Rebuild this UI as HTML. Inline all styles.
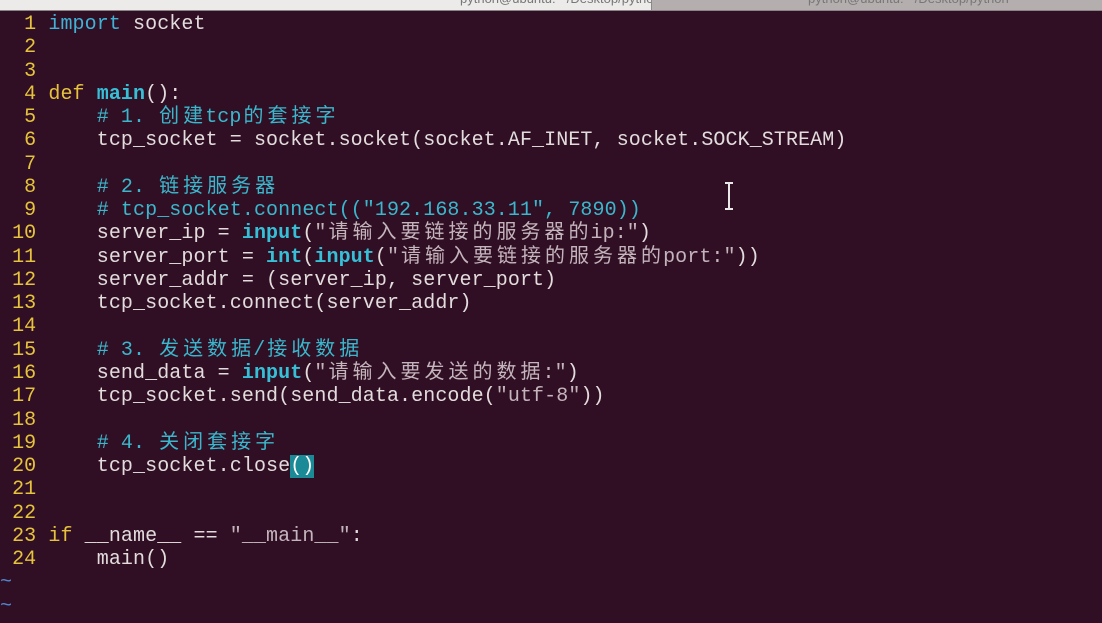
<!DOCTYPE html>
<html><head><meta charset="utf-8"><style>
html,body{margin:0;padding:0}
body{width:1102px;height:623px;background:#300f24;position:relative;overflow:hidden;font-family:"Liberation Mono","Noto Sans CJK SC",monospace;font-size:20px;color:#e2dcdc}
.top{position:absolute;left:0;top:0;width:1102px;height:10px;background:#b4afae;border-bottom:1px solid #8a8585;overflow:hidden}
.tab{position:absolute;left:0;top:0;width:651px;height:10px;background:#ecebea;border-right:1px solid #888;overflow:hidden}
.tt{position:absolute;top:-9px;font:13px "Liberation Sans",sans-serif;color:#777;white-space:nowrap}
.code{position:absolute;left:0;top:13px;white-space:pre;line-height:23.26px;letter-spacing:0.09px}
.n{color:#e6c33c}
.k{color:#e6c33c}
.b{color:#3fb2d6}
.f{color:#35c0d8;font-weight:bold}
.c{color:#3ab7cc}
.s{color:#c4b4bc}
.t{color:#4f86d0}
i{display:inline-block;width:24px;font-style:normal;text-align:center}
.cur{background:#1a8a96;color:#fff}
</style></head><body>
<div class="top"><div class="tab"><span class="tt" style="left:460px">python@ubuntu: ~/Desktop/python</span></div><span class="tt" style="left:808px">python@ubuntu: ~/Desktop/python</span></div>
<div class="code"><span class="n">  1 </span><span class="b">import</span> socket
<span class="n">  2 </span>
<span class="n">  3 </span>
<span class="n">  4 </span><span class="k">def</span> <span class="f">main</span>():
<span class="n">  5 </span>    <span class="c"># 1. <i>创</i><i>建</i>tcp<i>的</i><i>套</i><i>接</i><i>字</i></span>
<span class="n">  6 </span>    tcp_socket = socket.socket(socket.AF_INET, socket.SOCK_STREAM)
<span class="n">  7 </span>
<span class="n">  8 </span>    <span class="c"># 2. <i>链</i><i>接</i><i>服</i><i>务</i><i>器</i></span>
<span class="n">  9 </span>    <span class="c"># tcp_socket.connect(("192.168.33.11", 7890))</span>
<span class="n"> 10 </span>    server_ip = <span class="f">input</span>(<span class="s">"<i>请</i><i>输</i><i>入</i><i>要</i><i>链</i><i>接</i><i>的</i><i>服</i><i>务</i><i>器</i><i>的</i>ip:"</span>)
<span class="n"> 11 </span>    server_port = <span class="f">int</span>(<span class="f">input</span>(<span class="s">"<i>请</i><i>输</i><i>入</i><i>要</i><i>链</i><i>接</i><i>的</i><i>服</i><i>务</i><i>器</i><i>的</i>port:"</span>))
<span class="n"> 12 </span>    server_addr = (server_ip, server_port)
<span class="n"> 13 </span>    tcp_socket.connect(server_addr)
<span class="n"> 14 </span>
<span class="n"> 15 </span>    <span class="c"># 3. <i>发</i><i>送</i><i>数</i><i>据</i>/<i>接</i><i>收</i><i>数</i><i>据</i></span>
<span class="n"> 16 </span>    send_data = <span class="f">input</span>(<span class="s">"<i>请</i><i>输</i><i>入</i><i>要</i><i>发</i><i>送</i><i>的</i><i>数</i><i>据</i>:"</span>)
<span class="n"> 17 </span>    tcp_socket.send(send_data.encode(<span class="s">"utf-8"</span>))
<span class="n"> 18 </span>
<span class="n"> 19 </span>    <span class="c"># 4. <i>关</i><i>闭</i><i>套</i><i>接</i><i>字</i></span>
<span class="n"> 20 </span>    tcp_socket.close<span class="cur">()</span>
<span class="n"> 21 </span>
<span class="n"> 22 </span>
<span class="n"> 23 </span><span class="k">if</span> __name__ == <span class="s">"__main__"</span>:
<span class="n"> 24 </span>    main()
<span class="t">~</span>
<span class="t">~</span></div>
<svg style="position:absolute;left:722px;top:182px" width="14" height="28"><path d="M3 1h8M7 1v26M3 27h8" stroke="#e8e8e8" stroke-width="2" fill="none"/></svg>
</body></html>
